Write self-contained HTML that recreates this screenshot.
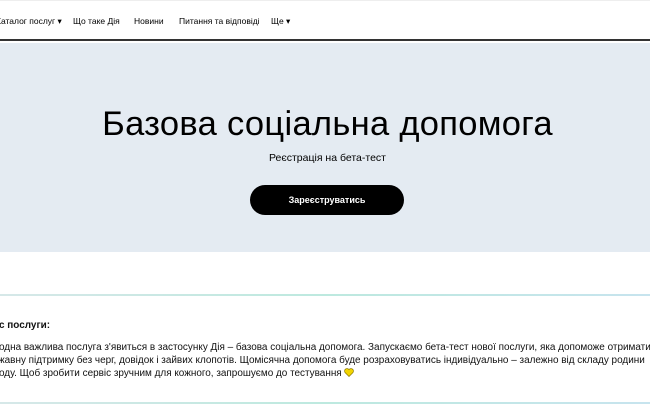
<!DOCTYPE html>
<html><head><meta charset="utf-8"><style>
*{margin:0;padding:0;box-sizing:border-box}
body{width:650px;height:420px;overflow:hidden;background:#fff;font-family:"Liberation Sans",sans-serif;color:#000;position:relative}
.top{position:absolute;left:0;right:0;top:0;height:1px;background:#eee}
.nav{position:absolute;top:0;left:0;width:650px;height:41px;border-bottom:2px solid #333;font-size:8.5px}
.nav span{position:absolute;top:16px;white-space:nowrap}
.hero{position:absolute;top:43px;left:0;width:650px;height:209px;background:#e4ebf2;text-align:center}
h1{position:absolute;top:62px;left:0;width:655px;font-weight:normal;font-size:34.5px;letter-spacing:0.3px}
.sub{position:absolute;top:109px;left:0;width:655px;font-size:10.5px}
.btn{position:absolute;left:250px;top:142px;width:154px;height:30px;background:#000;border-radius:15px;color:#fff;font-size:9px;font-weight:bold;line-height:30px}
.line{position:absolute;left:0;width:650px;height:2px;background:linear-gradient(90deg,#d6e8e8,#bde9df 50%,#c7e4ee)}
.t{position:absolute;left:-9px;font-size:9.95px;white-space:nowrap;color:#111}
</style></head><body>
<div class="top"></div>
<div class="nav">
<span style="left:-4px">Каталог послуг ▾</span>
<span style="left:73px">Що таке Дія</span>
<span style="left:134px">Новини</span>
<span style="left:179px">Питання та відповіді</span>
<span style="left:271px">Ще ▾</span>
</div>
<div class="hero">
<h1>Базова соціальна допомога</h1>
<div class="sub">Реєстрація на бета-тест</div>
<div class="btn">Зареєструватись</div>
</div>
<div class="line" style="top:294px"></div>
<div class="t" style="top:320px;left:-1px;font-weight:bold">с послуги:</div>
<div class="t" style="top:342px;left:-1px">одна важлива послуга з'явиться в застосунку Дія – базова соціальна допомога. Запускаємо бета-тест нової послуги, яка допоможе отримати</div>
<div class="t" style="top:355px;left:-2px">жавну підтримку без черг, довідок і зайвих клопотів. Щомісячна допомога буде розраховуватись індивідуально – залежно від складу родини</div>
<div class="t" style="top:368px;left:-1px">оду. Щоб зробити сервіс зручним для кожного, запрошуємо до тестування <svg width="10" height="9" viewBox="0 0 10 9" style="vertical-align:-1px"><path d="M5 8.5L1 4.5A2.3 2.3 0 0 1 5 1.6A2.3 2.3 0 0 1 9 4.5Z" fill="#f2d400" stroke="#8a7a00" stroke-width="0.7"/></svg></div>
<div class="line" style="top:402px"></div>
</body></html>
